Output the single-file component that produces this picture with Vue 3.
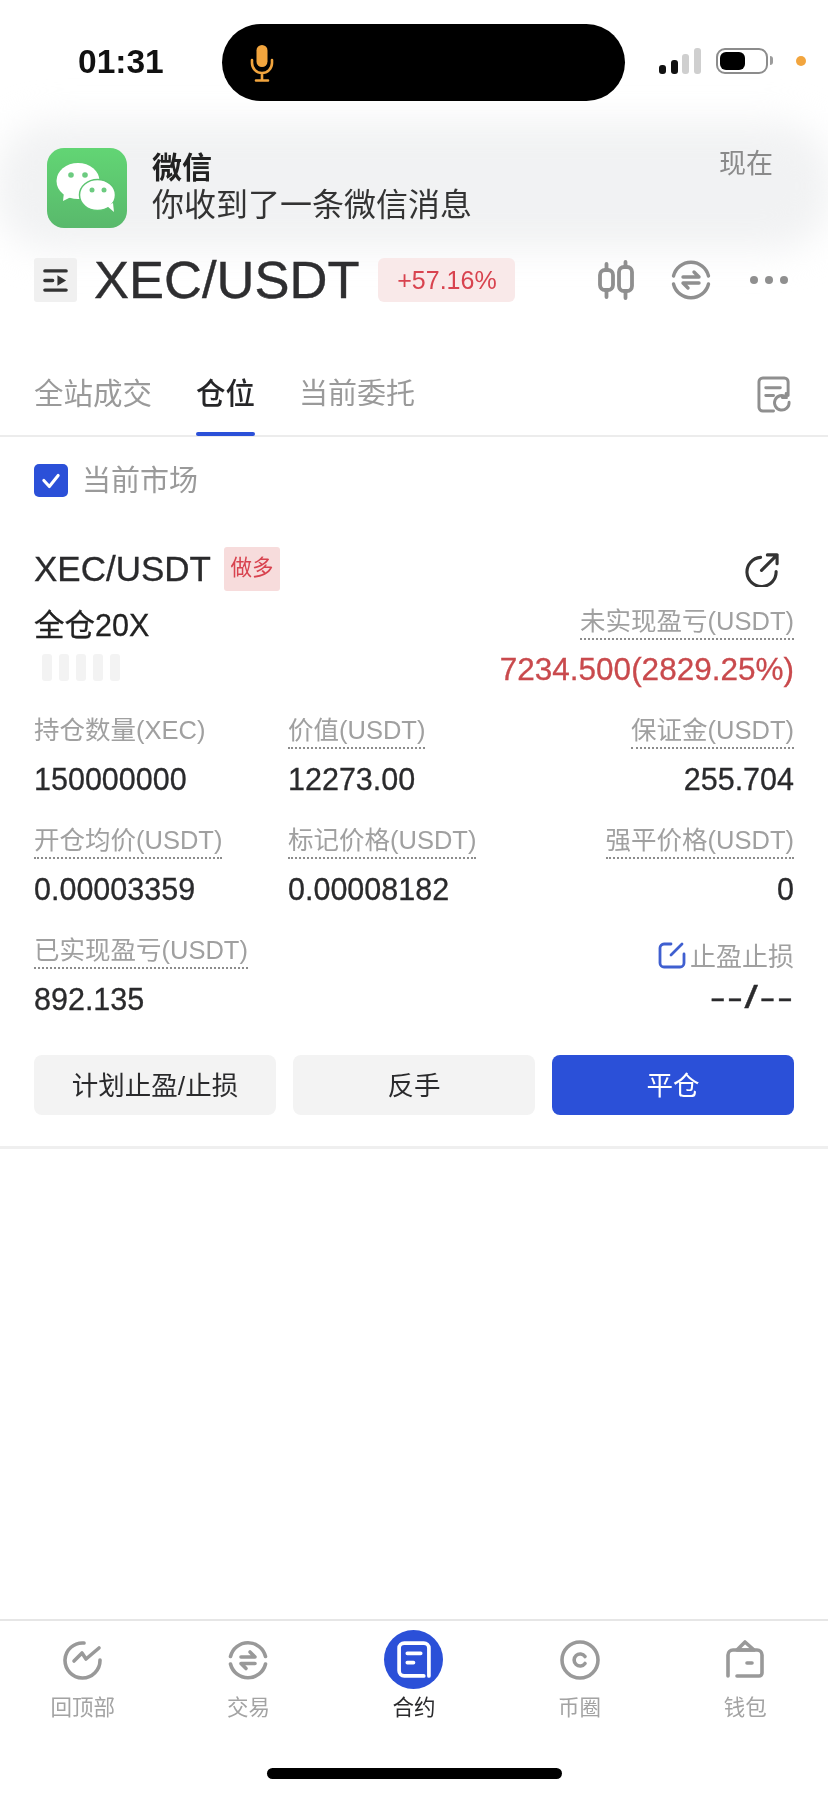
<template>
  <div class="page">
    <!-- 状态栏 -->
    <div class="status">
      <span class="time">01:31</span>
      <div class="island">
        <svg class="mic" viewBox="0 0 26 38" fill="none" stroke="#f2a53e" stroke-width="2.600" stroke-linecap="round">
          <rect x="7.500" y="1" width="11" height="22" rx="5.500" fill="#f2a53e" stroke="none" />
          <path d="M3 16v3a10 10 0 0 0 20 0v-3M13 29v7M7 36.500h12" />
        </svg>
      </div>
      <div class="signal">
        <i v-for="(h, i) in signalBars" :key="i" :class="{ off: i > 1 }" :style="{ height: h + 'px' }"></i>
      </div>
      <div class="battery"><b></b></div>
      <span class="orange-dot"></span>
    </div>

    <!-- 微信通知 -->
    <div class="banner-bg"></div>
    <div class="banner">
      <svg class="wechat" viewBox="0 0 80 80">
        <defs>
          <linearGradient id="wx" x1="0" y1="0" x2="0" y2="1">
            <stop offset="0" stop-color="#62d574" />
            <stop offset="1" stop-color="#59b96c" />
          </linearGradient>
        </defs>
        <rect width="80" height="80" rx="17" fill="url(#wx)" />
        <ellipse cx="31" cy="33" rx="21.500" ry="18" fill="#fff" />
        <path d="M17 44l-1 9 10-5z" fill="#fff" />
        <ellipse cx="50.500" cy="47" rx="18" ry="15.500" fill="#fff" stroke="#5cc470" stroke-width="1.500" />
        <path d="M60 58l7 6-1-9z" fill="#fff" />
        <circle cx="24" cy="27" r="2.800" fill="#6ccb80" />
        <circle cx="38" cy="27" r="2.800" fill="#6ccb80" />
        <circle cx="45" cy="42" r="2.500" fill="#6ccb80" />
        <circle cx="57" cy="42" r="2.500" fill="#6ccb80" />
      </svg>
      <div class="banner-text">
        <div class="banner-title">微信</div>
        <div class="banner-msg">你收到了一条微信消息</div>
      </div>
      <span class="banner-now">现在</span>
    </div>

    <!-- 标题栏 -->
    <div class="header">
      <div class="menu-btn">
        <svg viewBox="0 0 28 26" fill="none" stroke="#333" stroke-width="3.600" stroke-linecap="round">
          <path d="M3 3h22M3 13h8M3 23h22" />
          <path d="M16 7.500l9 5.500-9 5.500z" fill="#333" stroke="none" />
        </svg>
      </div>
      <span class="pair">XEC/USDT</span>
      <span class="change">+57.16%</span>
      <div class="header-icons">
        <svg class="icon-candle" viewBox="0 0 36 40" fill="none" stroke="#8f8f8f" stroke-width="3.800" stroke-linecap="round">
          <rect x="2" y="10" width="13" height="20" rx="5" />
          <rect x="21" y="7" width="13" height="24" rx="5" />
          <path d="M8.500 4v6M8.500 30v7M27.500 2v5M27.500 31v7" />
        </svg>
        <svg class="icon-swap" viewBox="0 0 40 40" fill="none" stroke="#8f8f8f" stroke-width="3.400" stroke-linecap="round" stroke-linejoin="round">
          <path d="M2.500 16A18 18 0 0 1 37.500 16M2.500 24A18 18 0 0 0 37.500 24" />
          <path d="M12 17h16l-5-5M28 23H12l5 5" />
        </svg>
        <div class="dots"><i></i><i></i><i></i></div>
      </div>
    </div>

    <!-- 标签页 -->
    <div class="tabs">
      <span
        v-for="tab in tabs"
        :key="tab"
        class="tab"
        :class="{ active: tab === currentTab }"
      >{{ tab }}</span>
      <svg class="icon-record" viewBox="0 0 36 38" fill="none" stroke="#8f8f8f" stroke-width="3" stroke-linecap="round">
        <path d="M17 36H6a4 4 0 0 1-4-4V6a4 4 0 0 1 4-4h22a4 4 0 0 1 4 4v14" />
        <path d="M9 12h15M9 20h8" />
        <path d="M33 27a7.500 7.500 0 1 1-3-5.500" />
        <path d="M30 18v4h-4" />
      </svg>
    </div>

    <!-- 当前市场 -->
    <div class="filter">
      <span class="checkbox">
        <svg viewBox="0 0 20 20" fill="none" stroke="#fff" stroke-width="2.800" stroke-linecap="round" stroke-linejoin="round">
          <path d="M3.500 9.500l5 5.500L16.500 5" />
        </svg>
      </span>
      <span class="filter-text">当前市场</span>
    </div>

    <!-- 持仓卡片 -->
    <div class="position">
      <div class="pos-title">
        <span class="pos-name">XEC/USDT</span>
        <span class="pos-tag">做多</span>
        <svg class="icon-share" viewBox="0 0 36 36" fill="none" stroke="#333" stroke-width="3.200" stroke-linecap="round" stroke-linejoin="round">
          <path d="M16 5.500A15 15 0 1 0 32 20" />
          <path d="M17 19L33 3M23 3h10v9" />
        </svg>
      </div>

      <div class="pos-summary">
        <div>
          <div class="pos-mode">全仓20X</div>
          <div class="masked"><i v-for="n in 5" :key="n"></i></div>
        </div>
        <div class="pos-pnl">
          <span class="label">未实现盈亏(USDT)</span>
          <div class="pnl-value">7234.500(2829.25%)</div>
        </div>
      </div>

      <div class="stats">
        <div v-for="item in stats" :key="item.label" class="stat" :class="{ right: item.right }">
          <span class="label" :class="{ plain: item.plain }">{{ item.label }}</span>
          <div class="value">{{ item.value }}</div>
        </div>
        <div class="stat-spacer"></div>
        <div class="stat right tp-sl">
          <div class="tp-label">
            <svg viewBox="0 0 28 28" fill="none" stroke="#3f5fd0" stroke-width="2.800" stroke-linecap="round">
              <path d="M13 3H6a4 4 0 0 0-4 4v15a4 4 0 0 0 4 4h16a4 4 0 0 0 4-4V13" />
              <path d="M13 14L24 3" />
            </svg>
            <span>止盈止损</span>
          </div>
          <div class="value tp-value">--/--</div>
        </div>
      </div>

      <div class="actions">
        <button class="btn">计划止盈/止损</button>
        <button class="btn">反手</button>
        <button class="btn primary">平仓</button>
      </div>
    </div>
    <div class="divider"></div>

    <!-- 底部导航 -->
    <div class="tabbar">
      <div class="tabbar-items">
        <div class="nav-item">
          <div class="nav-icon">
            <svg viewBox="0 0 40 40" fill="none" stroke="#999" stroke-width="3.600" stroke-linecap="round" stroke-linejoin="round">
              <path d="M21 3A17.500 17.500 0 1 0 37 20" />
              <path d="M11 21l8-8 4 6 13-11" />
            </svg>
          </div>
          <span>回顶部</span>
        </div>
        <div class="nav-item">
          <div class="nav-icon">
            <svg viewBox="0 0 40 40" fill="none" stroke="#999" stroke-width="3.600" stroke-linecap="round" stroke-linejoin="round">
              <path d="M2.500 16.500A18 18 0 0 1 37.500 16.500M2.500 24A18 18 0 0 0 37.500 24" />
              <path d="M13 17h14l-5-5M27 23.500H13l5 5" />
            </svg>
          </div>
          <span>交易</span>
        </div>
        <div class="nav-item active">
          <div class="nav-icon">
            <span class="nav-circle">
              <svg viewBox="0 0 36 36" fill="none" stroke="#fff" stroke-width="3.600" stroke-linecap="round">
                <path d="M28 34H9a5 5 0 0 1-5-5V7a5 5 0 0 1 5-5h19a5 5 0 0 1 5 5v27" />
                <path d="M12 12h13M12 21h6" />
              </svg>
            </span>
          </div>
          <span>合约</span>
        </div>
        <div class="nav-item">
          <div class="nav-icon">
            <svg viewBox="0 0 40 40" fill="none" stroke="#999" stroke-width="3.600" stroke-linecap="round">
              <circle cx="20" cy="20" r="18" />
              <path d="M25 16.500a6 6 0 1 0 0 7" />
            </svg>
          </div>
          <span>币圈</span>
        </div>
        <div class="nav-item">
          <div class="nav-icon">
            <svg viewBox="0 0 40 40" fill="none" stroke="#999" stroke-width="3.600" stroke-linecap="round" stroke-linejoin="round">
              <path d="M3 36V15a5 5 0 0 1 5-5h24a5 5 0 0 1 5 5v18a3 3 0 0 1-3 3H12" />
              <path d="M12 10l8-8 9 8z" />
              <path d="M22 23h5" />
            </svg>
          </div>
          <span>钱包</span>
        </div>
      </div>
      <div class="home-indicator"></div>
    </div>
  </div>
</template>

<script setup>
import { ref } from 'vue';

const signalBars = [9, 14, 20, 26];
const tabs = ['全站成交', '仓位', '当前委托'];
const currentTab = ref('仓位');

// 数据表格，最后一行右侧的止盈止损单独写
const stats = [
  { label: '持仓数量(XEC)', value: '150000000', plain: true },
  { label: '价值(USDT)', value: '12273.00' },
  { label: '保证金(USDT)', value: '255.704', right: true },
  { label: '开仓均价(USDT)', value: '0.00003359' },
  { label: '标记价格(USDT)', value: '0.00008182' },
  { label: '强平价格(USDT)', value: '0', right: true },
  { label: '已实现盈亏(USDT)', value: '892.135' },
];
</script>

<style>
body {
  background: #fff;
}
</style>

<style scoped>
.page {
  position: relative;
  width: 828px;
  height: 1796px;
  display: flex;
  flex-direction: column;
  overflow: hidden;
  background: #fff;
  color: #2a2a2c;
  font-family: 'Liberation Sans', 'Noto Sans CJK SC', sans-serif;
  filter: blur(0.5px);
}

/* 状态栏 */
.status {
  position: relative;
  z-index: 3;
  height: 125px;
  padding: 24px 0 0 78px;
  box-sizing: border-box;
  display: flex;
  align-items: flex-start;
}
.time {
  width: 144px;
  height: 77px;
  line-height: 76px;
  font-size: 33.500px;
  font-weight: 700;
  color: #111;
}
.island {
  width: 403px;
  height: 77px;
  border-radius: 39px;
  background: #000;
  display: flex;
  align-items: center;
  padding-left: 27px;
  box-sizing: border-box;
}
.mic {
  width: 26px;
  height: 38px;
}
.signal {
  height: 77px;
  margin-left: 34px;
  padding-bottom: 27px;
  box-sizing: border-box;
  display: flex;
  align-items: flex-end;
  gap: 4.500px;
}
.signal i {
  width: 7px;
  border-radius: 3px;
  background: #111;
}
.signal i.off {
  background: #cfcfcf;
}
.battery {
  position: relative;
  width: 52px;
  height: 26px;
  margin: 24px 0 0 15.500px;
  border: 2px solid #8c8c8c;
  border-radius: 9px;
  box-sizing: border-box;
  padding: 2px;
}
.battery::after {
  content: '';
  position: absolute;
  right: -7px;
  top: 6px;
  width: 3px;
  height: 9px;
  border-radius: 0 3px 3px 0;
  background: #9c9c9c;
}
.battery b {
  display: block;
  width: 25px;
  height: 100%;
  border-radius: 6px;
  background: #000;
}
.orange-dot {
  width: 10px;
  height: 10px;
  margin: 32px 0 0 28px;
  border-radius: 50%;
  background: #f2a53e;
}

/* 通知横幅 */
.banner-bg {
  position: absolute;
  z-index: 0;
  left: -4px;
  right: -4px;
  top: 122px;
  height: 128px;
  border-radius: 56px;
  background: #f1f2f3;
  filter: blur(18px);
}
.banner {
  position: absolute;
  z-index: 2;
  left: 47px;
  right: 55px;
  top: 148px;
  display: flex;
  align-items: flex-start;
}
.wechat {
  width: 80px;
  height: 80px;
  flex: none;
}
.banner-text {
  margin-left: 25px;
  flex: 1;
}
.banner-title {
  margin-top: 2px;
  line-height: 36px;
  font-size: 30px;
  font-weight: 700;
  color: #222;
}
.banner-msg {
  line-height: 38px;
  font-size: 32px;
  color: #333;
}
.banner-now {
  line-height: 32px;
  font-size: 27px;
  color: #8a8a8a;
}

/* 标题栏 */
.header {
  position: relative;
  z-index: 1;
  height: 44px;
  margin-top: 133px;
  padding: 0 40px 0 34px;
  display: flex;
  align-items: center;
}
.menu-btn {
  width: 43px;
  height: 44px;
  background: #f0f0f0;
  border-radius: 3px;
  display: flex;
  align-items: center;
  justify-content: center;
}
.menu-btn svg {
  width: 27px;
  height: 25px;
}
.pair {
  margin-left: 17px;
  font-size: 52.500px;
  line-height: 44px;
  color: #2e2e30;
  -webkit-text-stroke: 0.4px #2e2e30;
}
.change {
  margin-left: 19px;
  width: 137px;
  height: 44px;
  line-height: 45px;
  text-align: center;
  font-size: 25px;
  border-radius: 6px;
  background: #f9e9e9;
  color: #d8434f;
}
.header-icons {
  margin-left: auto;
  display: flex;
  align-items: center;
}
.icon-candle {
  width: 36px;
  height: 40px;
}
.icon-swap {
  width: 40px;
  height: 40px;
  margin-left: 37px;
}
.dots {
  margin-left: 39px;
  display: flex;
  gap: 7px;
}
.dots i {
  width: 8px;
  height: 8px;
  border-radius: 50%;
  background: #8f8f8f;
}

/* 标签页 */
.tabs {
  height: 71px;
  margin-top: 64px;
  padding: 0 36px 0 34px;
  box-sizing: border-box;
  display: flex;
  gap: 44px;
  border-bottom: 2px solid #ececec;
}
.tab {
  position: relative;
  height: 70px;
  line-height: 56px;
  font-size: 29.500px;
  color: #9a9a9a;
}
.tab:last-of-type {
  font-size: 29px;
}
.tab.active {
  color: #262628;
  font-weight: 500;
}
.tab.active::after {
  content: '';
  position: absolute;
  left: 0;
  right: 0;
  bottom: 0;
  height: 4px;
  border-radius: 2px;
  background: #2b50d8;
}
.icon-record {
  width: 35px;
  height: 37px;
  margin: 10px 0 0 auto;
}

/* 当前市场 */
.filter {
  height: 33px;
  margin-top: 27px;
  padding-left: 34px;
  display: flex;
  align-items: center;
  gap: 14px;
  font-size: 29px;
  color: #9a9a9a;
}
.filter-text {
  padding-bottom: 6px;
}
.checkbox {
  width: 34px;
  height: 33px;
  border-radius: 5px;
  background: #2b50d8;
  display: flex;
  align-items: center;
  justify-content: center;
}
.checkbox svg {
  width: 22px;
  height: 22px;
}

/* 持仓卡片 */
.position {
  padding: 0 34px;
}
.pos-title {
  height: 44px;
  margin-top: 50px;
  display: flex;
  align-items: center;
}
.pos-name {
  font-size: 35px;
  color: #2a2a2c;
  -webkit-text-stroke: 0.3px #2a2a2c;
}
.pos-tag {
  margin-left: 13px;
  width: 56px;
  height: 44px;
  line-height: 42px;
  text-align: center;
  font-size: 21.500px;
  border-radius: 3px;
  background: #f7dcdc;
  color: #d8434f;
}
.icon-share {
  width: 35px;
  height: 35px;
  margin: 0 14px 0 auto;
}
.pos-summary {
  margin-top: 15px;
  display: flex;
  justify-content: space-between;
}
.pos-mode {
  line-height: 38px;
  font-size: 30.500px;
  color: #222;
  -webkit-text-stroke: 0.3px #222;
}
.masked {
  margin: 10px 0 0 8px;
  display: flex;
  gap: 7px;
}
.masked i {
  width: 10px;
  height: 27px;
  border-radius: 3px;
  background: #f3f3f3;
}
.pos-pnl {
  text-align: right;
}
.label {
  display: inline-block;
  line-height: 30px;
  padding-bottom: 2px;
  font-size: 25.500px;
  color: #a0a0a0;
  border-bottom: 2px dotted #8c8c8c;
}
.label.plain {
  border-bottom-color: transparent;
}
.pnl-value {
  margin-top: 10px;
  line-height: 38px;
  font-size: 31.500px;
  color: #c94a4d;
  -webkit-text-stroke: 0.3px #c94a4d;
}
.stats {
  margin-top: 27px;
  display: grid;
  grid-template-columns: 254px 1fr auto;
  row-gap: 27px;
}
.stat.right {
  text-align: right;
}
.value {
  margin-top: 11px;
  line-height: 38px;
  font-size: 30.500px;
  color: #2a2a2c;
  -webkit-text-stroke: 0.3px #2a2a2c;
}
.tp-sl {
  padding-top: 6px;
}
.tp-label {
  height: 28px;
  display: flex;
  justify-content: flex-end;
  align-items: center;
  gap: 4px;
  font-size: 26px;
  color: #a0a0a0;
}
.tp-label span {
  padding-bottom: 2px;
}
.tp-label svg {
  width: 28px;
  height: 28px;
}
/* 破折号比字体里的连字符长，横向拉宽 */
.tp-value {
  margin-top: 9px;
  font-size: 32px;
  letter-spacing: 1px;
  transform: scaleX(1.5);
  transform-origin: right center;
}
.actions {
  margin-top: 37px;
  display: grid;
  grid-template-columns: repeat(3, 1fr);
  gap: 17px;
}
.btn {
  height: 60px;
  padding: 0 0 4px;
  border: none;
  border-radius: 8px;
  background: #f3f3f3;
  font: inherit;
  font-size: 26.500px;
  color: #2a2a2c;
}
.btn.primary {
  background: #2b50d8;
  color: #fff;
}
.divider {
  height: 3px;
  margin-top: 31px;
  background: #efefef;
}

/* 底部导航 */
.tabbar {
  margin-top: auto;
  height: 177px;
  box-sizing: border-box;
  border-top: 2px solid #e6e6e6;
  padding-top: 9px;
  display: flex;
  flex-direction: column;
  align-items: center;
}
.tabbar-items {
  width: 100%;
  display: grid;
  grid-template-columns: repeat(5, 1fr);
}
.nav-item {
  display: flex;
  flex-direction: column;
  align-items: center;
  font-size: 21.500px;
  line-height: 30px;
  color: #a3a3a3;
}
.nav-item.active {
  color: #2a2a2c;
}
.nav-icon {
  height: 59px;
  margin-bottom: 4px;
  display: flex;
  align-items: center;
}
.nav-icon > svg {
  width: 40px;
  height: 40px;
}
.nav-circle {
  width: 59px;
  height: 59px;
  border-radius: 50%;
  background: #2b50d8;
  display: flex;
  align-items: center;
  justify-content: center;
}
.nav-circle svg {
  width: 37px;
  height: 37px;
}
.home-indicator {
  width: 295px;
  height: 11px;
  margin-top: 45px;
  border-radius: 6px;
  background: #000;
}
</style>
